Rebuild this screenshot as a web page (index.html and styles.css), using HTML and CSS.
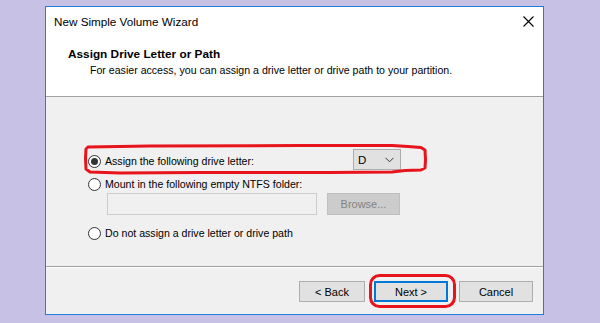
FILE: index.html
```html
<!DOCTYPE html>
<html lang="en">
<head>
  <meta charset="utf-8">
  <title>New Simple Volume Wizard</title>
  <link rel="stylesheet" href="styles.css">
</head>
<body>

  <div class="window">
    <div class="header">
      <div class="titlebar">
        <span class="title">New Simple Volume Wizard</span>
        <svg class="close" width="11" height="11" viewBox="0 0 11 11">
          <path d="M0.5 0.5 L10.5 10.5 M10.5 0.5 L0.5 10.5" stroke="#000" stroke-width="1.1" fill="none"/>
        </svg>
      </div>
      <div class="heading">Assign Drive Letter or Path</div>
      <div class="subheading">For easier access, you can assign a drive letter or drive path to your partition.</div>
    </div>

    <div class="content">
      <div class="row first">
        <span class="radio checked"></span>
        <span class="label wide">Assign the following drive letter:</span>
        <div class="select">
          <span>D</span>
          <svg width="9" height="6" viewBox="0 0 9 6">
            <path d="M0.5 0.8 L4.5 4.8 L8.5 0.8" stroke="#333" stroke-width="1" fill="none"/>
          </svg>
        </div>
      </div>

      <div class="row second">
        <span class="radio"></span>
        <span class="label">Mount in the following empty NTFS folder:</span>
      </div>
      <div class="folder">
        <div class="textbox"></div>
        <div class="btn disabled">Browse...</div>
      </div>

      <div class="row third">
        <span class="radio"></span>
        <span class="label">Do not assign a drive letter or drive path</span>
      </div>
    </div>

    <div class="footer">
      <div class="btn back">&lt; Back</div>
      <div class="btn next">Next &gt;</div>
      <div class="btn cancel">Cancel</div>
    </div>
  </div>

  <!-- hand drawn highlight marks -->
  <svg class="marks" width="600" height="323" viewBox="0 0 600 323">
    <path d="M88 147 L150 146 L300 145.5 L392 145.5 L408 146.5 L421 147.5 L425 150 L425.5 160 L425 168 L421 170 L405 170.5 L392 172 L330 172.5 L200 172.5 L120 173 L90 172 L86 169 L85.5 158 L86 149 Z"
          stroke="#e8141c" stroke-width="3" fill="none" stroke-linejoin="round"/>
    <rect x="370.5" y="275.5" width="84" height="31" rx="9" ry="9" stroke="#e8141c" stroke-width="3" fill="none"/>
  </svg>

</body>
</html>
```

FILE: styles.css
```css
body {
  margin: 0;
  background-color: #c8c1e6;
  font-family: "Liberation Sans", Arial, sans-serif;
  font-size: 10.6px;
  color: #000;
}

.window {
  width: 497px;
  height: 307px;
  margin: 6px 0 0 45px;
  border: 1px solid #1c7fd9;
  background-color: #f0f0f0;
  display: flex;
  flex-direction: column;
}

.header {
  height: 89px;
  background-color: #fff;
  border-bottom: 1px solid #a0a0a0;
}

.titlebar {
  height: 28px;
  display: flex;
  align-items: center;
  justify-content: space-between;
  padding: 0 9px 0 8px;
}

.title {
  font-size: 11.7px;
}

.heading {
  margin-top: 12px;
  padding-left: 22px;
  font-weight: bold;
  font-size: 11.8px;
}

.subheading {
  margin-top: 3px;
  padding-left: 44px;
}

.content {
  height: 170px;
  padding: 52px 0 0 42px;
  box-sizing: border-box;
  border-bottom: 1px solid #a0a0a0;
  box-shadow: 0 1px 0 #fff;
}

.row {
  display: flex;
  align-items: center;
}

.row.first {
  height: 21px;
}

.row.first .radio,
.row.first .label {
  margin-top: 3px;
}

.row.second {
  height: 14px;
  margin-top: 7px;
}

.row.third {
  height: 14px;
  margin-top: 11px;
}

.radio {
  width: 11px;
  height: 11px;
  border: 1px solid #333;
  border-radius: 50%;
  background-color: #fff;
  position: relative;
  margin-right: 4px;
  flex-shrink: 0;
}

.radio.checked::after {
  content: "";
  position: absolute;
  left: 2px;
  top: 2px;
  width: 7px;
  height: 7px;
  border-radius: 50%;
  background-color: #333;
}

.label.wide {
  width: 248px;
}

.select {
  width: 36px;
  height: 19px;
  border: 1px solid #adadad;
  background-color: #e1e1e1;
  display: flex;
  align-items: center;
  justify-content: space-between;
  padding: 0 6px 0 4px;
  font-size: 11.5px;
}

.folder {
  display: flex;
  margin: 2px 0 0 19px;
}

.textbox {
  width: 208px;
  height: 20px;
  border: 1px solid #cccccc;
  background-color: #f0f0f0;
}

.btn {
  display: flex;
  align-items: center;
  justify-content: center;
  border: 1px solid #adadad;
  background-color: #e1e1e1;
  box-sizing: border-box;
  font-size: 11px;
}

.btn.disabled {
  width: 73px;
  height: 22px;
  margin-left: 10px;
  background-color: #cccccc;
  border-color: #bfbfbf;
  color: #838383;
}

.footer {
  flex: 1;
  display: flex;
  justify-content: flex-end;
  align-items: flex-start;
  padding: 14px 10px 0 0;
}

.footer .btn {
  height: 21px;
}

.btn.back {
  width: 66px;
}

.btn.next {
  width: 74px;
  margin-left: 9px;
  border: 2px solid #0078d7;
}

.btn.cancel {
  width: 74px;
  margin-left: 11px;
}

.marks {
  position: absolute;
  left: 0;
  top: 0;
  pointer-events: none;
}
```
